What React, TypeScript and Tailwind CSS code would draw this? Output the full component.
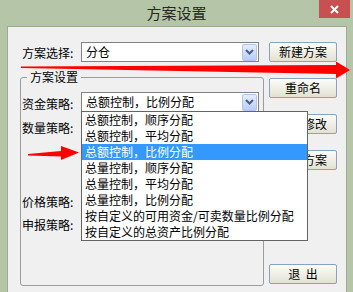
import React from 'react'

const font = { fontFamily: '"Noto Sans CJK SC", "Noto Sans", sans-serif' }

const listItems = [
  '总额控制，顺序分配',
  '总额控制，平均分配',
  '总额控制，比例分配',
  '总量控制，顺序分配',
  '总量控制，平均分配',
  '总量控制，比例分配',
  '按自定义的可用资金/可卖数量比例分配',
  '按自定义的总资产比例分配',
]

function DropButton() {
  return (
    <div className="mr-[1px] flex h-[17px] w-[15px] items-center justify-center rounded-[2px] border border-[#b3c5ee] bg-gradient-to-b from-[#e6eefd] to-[#b8ccf7]">
      <svg width="9" height="6" viewBox="0 0 9 6">
        <path d="M1 1 L4.5 4.5 L8 1" fill="none" stroke="#4a5f86" strokeWidth="2" />
      </svg>
    </div>
  )
}

function Combo({ value, children }: { value: string; children?: React.ReactNode }) {
  return (
    <div className="relative flex h-[20px] w-[178px] items-center border border-[#828282] bg-white">
      <span className="flex-1 pl-[4px] text-[12px] leading-[16px]">{value}</span>
      <DropButton />
      {children}
    </div>
  )
}

function XpButton({ label, className = '' }: { label: string; className?: string }) {
  return (
    <button className={`flex h-[20px] w-[68px] items-center justify-center whitespace-pre rounded-[2px] border border-[#8aa2ba] bg-gradient-to-b from-[#fdfdfa] to-[#e2e2d2] text-[12px] leading-[16px] text-black ${className}`}>
      {label}
    </button>
  )
}

export default function App() {
  return (
    <div className="relative flex h-[292px] w-[353px] flex-col overflow-hidden bg-[#b5c5a8] text-black" style={font}>
      {/* Title bar */}
      <div className="relative flex h-[26px] items-center justify-center">
        <span className="text-[15px] leading-[20px] text-[#262626]">方案设置</span>
        <div className="absolute top-0 right-[3px] flex h-[18px] w-[31px] items-center justify-center bg-[#c75050]">
          <svg width="9" height="9" viewBox="0 0 9 9">
            <path d="M1 1 L8 8 M8 1 L1 8" stroke="#fff" strokeWidth="2" />
          </svg>
        </div>
      </div>

      {/* Client area */}
      <div className="ml-[7px] mr-[6px] flex flex-1 border-x border-t border-[#9dab91] bg-[#f0f0f0]">
        <div className="w-[256px] pt-[15px] pl-[12px]">
          <div className="flex h-[20px] items-start">
            <span className="ml-[2px] mt-[1px] w-[59px] text-[12px] leading-[20px]">方案选择:</span>
            <Combo value="分仓" />
          </div>

          <fieldset className="mt-[7px] h-[217px] w-[244px] rounded-[3px] border border-[#9c9c9c]">
            <legend className="ml-[6px] px-[3px] text-[12px] leading-[16px]">方案设置</legend>

            <div className="mt-[7px] flex h-[20px] items-start">
              <span className="ml-[1px] mt-[2px] w-[59px] text-[12px] leading-[20px]">资金策略:</span>
              <Combo value="总额控制，比例分配">
                <div className="absolute top-full left-[-1px] z-10 w-[227px] border border-[#646464] bg-white">
                  {listItems.map((item, i) => (
                    <div
                      key={item}
                      className={`h-[16px] whitespace-nowrap pl-[3px] text-[12px] leading-[16px] ${
                        i === 2 ? 'bg-[#3399ff] text-white' : ''
                      }`}
                    >
                      {item}
                    </div>
                  ))}
                </div>
              </Combo>
            </div>

            <div className="ml-[1px] mt-[6px] h-[20px] text-[12px] leading-[20px]">数量策略:</div>
            <div className="ml-[1px] mt-[54px] h-[20px] text-[12px] leading-[20px]">价格策略:</div>
            <div className="ml-[1px] mt-[3px] h-[20px] text-[12px] leading-[20px]">申报策略:</div>
          </fieldset>
        </div>

        <div className="ml-[5px] flex flex-col gap-[16px] pt-[15px] pb-[8px]">
          <XpButton label="新建方案" />
          <XpButton label="重命名" />
          <XpButton label="保存修改" />
          <XpButton label="删除方案" />
          <XpButton label="退  出" className="mt-auto" />
        </div>
      </div>

      {/* Red arrows drawn over the dialog */}
      <svg className="pointer-events-none absolute top-0 left-0 z-20" width="353" height="292" viewBox="0 0 353 292">
        <polygon points="21,66.5 336,65 336,61.5 350,70 336,78.5 336,74 21,68" fill="#ff0000" />
        <polygon points="28,154 61,151 61,146 79,152.5 61,160 61,156.5 28,155.5" fill="#ff0000" />
      </svg>
    </div>
  )
}
